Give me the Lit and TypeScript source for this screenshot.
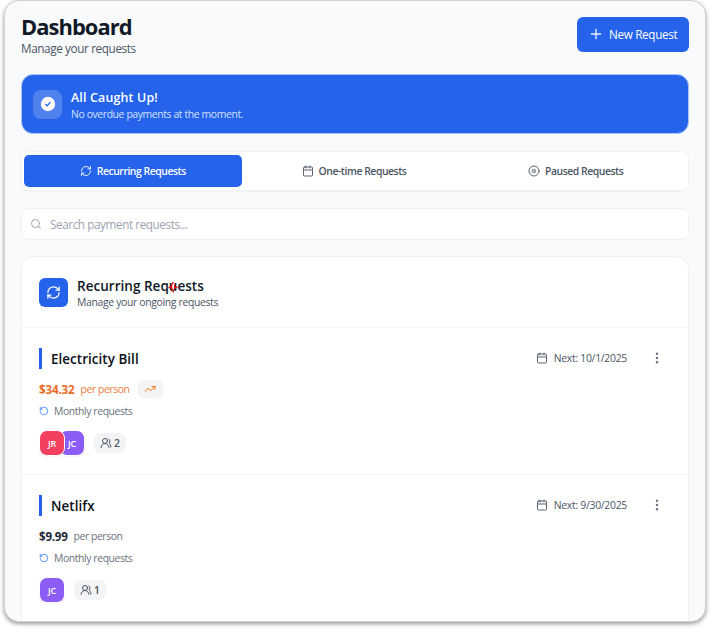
import { LitElement, html, css, svg, nothing } from "lit";
import { customElement, property } from "lit/decorators.js";

const glyphs = {
  plus: svg`<path d="M5 12h14M12 5v14"/>`,
  refresh: svg`<path d="M3 12a9 9 0 0 1 9-9 9.75 9.75 0 0 1 6.74 2.74L21 8"/><path d="M21 3v5h-5"/><path d="M21 12a9 9 0 0 1-9 9 9.75 9.75 0 0 1-6.74-2.74L3 16"/><path d="M8 16H3v5"/>`,
  calendar: svg`<path d="M8 2v4M16 2v4M3 10h18"/><rect width="18" height="18" x="3" y="4" rx="2"/>`,
  stop: svg`<circle cx="12" cy="12" r="10"/><rect x="8.5" y="8.5" width="7" height="7" fill="currentColor" fill-opacity=".55" stroke-width="1" stroke-opacity=".6"/>`,
  search: svg`<circle cx="11" cy="11" r="8"/><path d="m21 21-4.3-4.3"/>`,
  check: svg`<circle cx="12" cy="12" r="10.8" fill="#fff" stroke="none"/><path d="m8.5 12.5 2.3 2.3 4.4-5.2" stroke="#2563eb"/>`,
  trend: svg`<path d="m22 7-8.5 8.5-5-5L2 17"/><path d="M16 7h6v6"/>`,
  rotate: svg`<path d="M3 12a9 9 0 1 0 9-9 9.75 9.75 0 0 0-6.74 2.74L3 8"/><path d="M3 3v5h5"/>`,
  users: svg`<path d="M18 21a8 8 0 0 0-16 0"/><circle cx="10" cy="8" r="5"/><path d="M22 20c0-3.37-2-6.5-4-8a5 5 0 0 0-.45-8.3"/>`,
  dots: svg`<g fill="currentColor" stroke="none"><circle cx="12" cy="3.5" r="2.4"/><circle cx="12" cy="12" r="2.4"/><circle cx="12" cy="20.5" r="2.4"/></g>`,
};

@customElement("ui-icon")
export class UiIcon extends LitElement {
  @property() name: keyof typeof glyphs = "plus";
  static styles = css`
    :host { display: block; flex: none; width: 12px; height: 12px; }
    svg { display: block; width: 100%; height: 100%; fill: none; stroke: currentColor; stroke-width: 2; stroke-linecap: round; stroke-linejoin: round; }
  `;
  render() {
    return html`<svg viewBox="0 0 24 24">${glyphs[this.name]}</svg>`;
  }
}

interface Payment {
  title: string;
  price: string;
  raised: boolean;
  next: string;
  people: { initials: string; tone: string }[];
}

@customElement("payment-item")
export class PaymentItem extends LitElement {
  @property({ attribute: false }) item!: Payment;
  static styles = css`
    :host { display: block; height: 127px; padding: 19px 25px 0 17px; }
    .top, .left, .price, .cycle, .people, .next { display: flex; align-items: center; }
    .top { height: 22px; justify-content: space-between; }
    .bar { width: 3px; height: 21px; background: #2563eb; margin-right: 9px; }
    .title { font-size: 13.4px; line-height: 20px; margin-top: 1px; font-weight: 600; color: #0b0f19; letter-spacing: 0.06px; }
    .next { color: #4b5563; font-size: 10.4px; letter-spacing: -0.28px; }
    .next .cal { margin-right: 6px; color: #5b6472; }
    .next .dots { margin-left: 24px; color: #6b7280; }
    .price { height: 20px; margin-top: 10px; }
    .amount { font-size: 11.6px; font-weight: 700; color: #1f2937; letter-spacing: -0.25px; }
    .per { font-size: 10.4px; color: #6b7280; margin-left: 6px; letter-spacing: -0.43px; }
    .raised .amount { color: #ea6a1f; letter-spacing: -0.15px; }
    .raised .per { color: #ee7d3b; }
    .chip { display: flex; align-items: center; justify-content: center; background: #f3f4f6; border-radius: 6px; color: #f97316; width: 26px; height: 18px; margin-left: 8px; }
    .cycle { height: 22px; margin-top: 1px; font-size: 10.4px; color: #6b7280; letter-spacing: -0.4px; }
    .cycle ui-icon { width: 10px; height: 10px; color: #3b82f6; margin-right: 5px; }
    .people { height: 26px; margin-top: 8px; margin-left: 1px; }
    .avatar { position: relative; box-sizing: border-box; width: 26px; height: 26px; border: 1px solid #fff; border-radius: 8px; color: #fff; font-size: 9px; letter-spacing: -0.1px; font-weight: 600; display: flex; align-items: center; justify-content: center; box-shadow: 0 1px 2px #0000000d; margin-left: -6px; z-index: 0; }
    .avatar:first-child { margin-left: -1px; z-index: 1; }
    .rose { background: #f43f5e; }
    .violet { background: #8b5cf6; }
    .count { display: flex; align-items: center; gap: 2px; height: 20px; padding: 0 6px; border-radius: 6px; background: #f3f4f6; color: #4b5563; font-size: 10.4px; font-weight: 600; margin-left: 9px; }
  `;
  render() {
    const { title, price, raised, next, people } = this.item;
    return html`
      <div class="top">
        <div class="left"><span class="bar"></span><span class="title">${title}</span></div>
        <div class="next"><ui-icon class="cal" name="calendar"></ui-icon>Next: ${next}<ui-icon class="dots" name="dots"></ui-icon></div>
      </div>
      <div class="price ${raised ? "raised" : ""}">
        <span class="amount">${price}</span><span class="per">per person</span>
        ${raised ? html`<span class="chip"><ui-icon name="trend"></ui-icon></span>` : nothing}
      </div>
      <div class="cycle"><ui-icon name="rotate"></ui-icon>Monthly requests</div>
      <div class="people">
        ${people.map((p) => html`<span class="avatar ${p.tone}">${p.initials}</span>`)}
        <span class="count"><ui-icon name="users"></ui-icon>${people.length}</span>
      </div>`;
  }
}

const payments: Payment[] = [
  { title: "Electricity Bill", price: "$34.32", raised: true, next: "10/1/2025", people: [{ initials: "JR", tone: "rose" }, { initials: "JC", tone: "violet" }] },
  { title: "Netlifx", price: "$9.99", raised: false, next: "9/30/2025", people: [{ initials: "JC", tone: "violet" }] },
];

@customElement("app-root")
export class AppRoot extends LitElement {
  static styles = css`
    :host { display: block; box-sizing: border-box; width: 710px; height: 630px; padding: 0 4px; overflow: hidden; background: #fff; font-family: "Open Sans", "Noto Sans", sans-serif; white-space: nowrap; }
    .window { box-sizing: border-box; height: 622px; border: 1px solid #d0d1d3; border-radius: 15px; background: #f9fafc; box-shadow: 0 2px 4px #00000066; overflow: hidden; padding: 11px 16px 0; }
    header { display: flex; justify-content: space-between; height: 62px; }
    h1, h2, p { margin: 0; }
    h1 { font-size: 21.9px; line-height: 30px; font-weight: 700; color: #111827; letter-spacing: -0.95px; }
    .lead { margin-top: -2px; font-size: 11.7px; line-height: 17px; color: #4b5563; letter-spacing: -0.36px; }
    .new { display: flex; align-items: center; gap: 5px; box-sizing: border-box; height: 35px; width: 112px; margin-top: 5px; padding: 0 0 1px 11px; border-radius: 6px; background: #2563eb; color: #fff; font-size: 11.7px; letter-spacing: -0.32px; }
    .new ui-icon { width: 16px; height: 16px; }
    .new ui-icon, .tab ui-icon { opacity: 0.9; }
    .banner { display: flex; align-items: center; box-sizing: border-box; height: 60px; padding-left: 11px; border: 1px solid #a9c4f8; border-radius: 12px; background: #2563eb; color: #fff; }
    .badge { display: flex; align-items: center; justify-content: center; width: 29px; height: 29px; border-radius: 8px; background: #ffffff33; margin-right: 9px; }
    .badge ui-icon { width: 16px; height: 16px; }
    .banner h2 { margin-top: 2px; font-size: 12.4px; line-height: 17px; font-weight: 600; letter-spacing: 0.18px; }
    .banner p { font-size: 10.4px; line-height: 16px; color: #d3e1fd; letter-spacing: -0.38px; }
    .tabs { display: grid; grid-template-columns: repeat(3, 1fr); gap: 4px; box-sizing: border-box; height: 40px; padding: 3px 3px 3px 2px; margin-top: 17px; background: #fff; border: 1px solid #eff1f4; border-radius: 7px; box-shadow: 0 1px 1px #00000008; }
    .tab { display: flex; align-items: center; justify-content: center; gap: 5px; padding-right: 1px; border-radius: 5px; font-size: 10.4px; font-weight: 600; color: #4b5563; letter-spacing: -0.45px; }
    .tab.on { background: #2563eb; color: #fff; padding: 0; }
    .search { display: flex; align-items: center; gap: 8px; box-sizing: border-box; height: 32px; margin-top: 17px; padding: 0 0 1px 8px; background: #fff; border: 1px solid #eff1f4; border-radius: 7px; font-size: 11.7px; color: #9ca3af; letter-spacing: -0.4px; }
    .panel { margin-top: 16px; padding-bottom: 20px; background: #fff; border: 1px solid #eff1f4; border-radius: 13px; }
    .head { display: flex; align-items: center; position: relative; height: 70px; padding-left: 17px; border-bottom: 1px solid #f3f4f6; }
    .tile { display: flex; align-items: center; justify-content: center; width: 29px; height: 29px; margin-right: 9px; border-radius: 6px; background: #2563eb; color: #fff; }
    .tile ui-icon { width: 15px; height: 15px; }
    .head h2 { margin-top: 1px; font-size: 13.5px; line-height: 18px; font-weight: 600; color: #111827; letter-spacing: 0.03px; }
    .head p { font-size: 10.4px; line-height: 14px; color: #4b5563; letter-spacing: -0.33px; }
    .cursor { position: absolute; left: 145px; top: 25px; width: 12px; height: 11px; }
    payment-item + payment-item { border-top: 1px solid #f3f4f6; }
  `;
  render() {
    return html`
      <div class="window">
        <header>
          <div><h1>Dashboard</h1><p class="lead">Manage your requests</p></div>
          <div class="new"><ui-icon name="plus"></ui-icon><span>New Request</span></div>
        </header>
        <section class="banner">
          <span class="badge"><ui-icon name="check"></ui-icon></span>
          <div><h2>All Caught Up!</h2><p>No overdue payments at the moment.</p></div>
        </section>
        <nav class="tabs">
          <span class="tab on"><ui-icon name="refresh"></ui-icon><span>Recurring Requests</span></span>
          <span class="tab"><ui-icon name="calendar"></ui-icon><span>One-time Requests</span></span>
          <span class="tab"><ui-icon name="stop"></ui-icon><span>Paused Requests</span></span>
        </nav>
        <div class="search"><ui-icon name="search"></ui-icon><span>Search payment requests...</span></div>
        <section class="panel">
          <div class="head">
            <span class="tile"><ui-icon name="refresh"></ui-icon></span>
            <div><h2>Recurring Requests</h2><p>Manage your ongoing requests</p></div>
            <svg class="cursor" viewBox="0 0 12 11" fill="none" stroke="#e80c0c" stroke-width="1.3"><path d="M6.5 0Q4 3 4.6 5.5T6.5 10.5M7.6 2.5v4.5M1.5 5.5h2.5M8 5.5h2.5"/></svg>
          </div>
          ${payments.map((item) => html`<payment-item .item=${item}></payment-item>`)}
        </section>
      </div>`;
  }
}
